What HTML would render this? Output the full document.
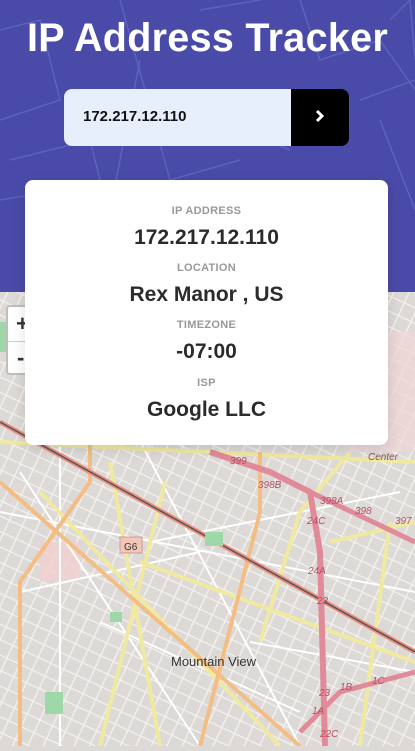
<!DOCTYPE html>
<html><head><meta charset="utf-8"><style>
*{margin:0;padding:0;box-sizing:border-box}
body{width:415px;height:746px;overflow:hidden;font-family:"Liberation Sans",sans-serif;position:relative;background:#dcd9d6}
.hdr{position:absolute;left:0;top:0;width:415px;height:292px;background:#4a4aa8;overflow:hidden}
h1{position:absolute;top:16px;width:100%;text-align:center;color:#fff;font-size:39.5px;font-weight:bold;letter-spacing:0.3px}
.inp{position:absolute;left:64px;top:89px;width:227px;height:57px;background:#e8effc;border-radius:8px 0 0 8px;font-size:15px;font-weight:bold;color:#111;padding:19px 0 0 19px}
.btn{position:absolute;left:291px;top:89px;width:58px;height:57px;background:#000;border-radius:0 8px 8px 0}
.map{position:absolute;left:0;top:292px;width:415px;height:454px}
.zoom{position:absolute;left:6px;top:305px;width:30px;height:70px;background:#fff;border:2px solid rgba(0,0,0,.25);border-radius:4px;font-size:22px;color:#333;font-weight:bold}
.card{position:absolute;left:25px;top:180px;width:363px;height:265px;background:#fff;border-radius:8px;text-align:center;box-shadow:0 4px 14px rgba(0,0,0,.12)}
.l{position:absolute;width:100%;font-size:11px;font-weight:bold;color:#999;letter-spacing:.3px}
.v{position:absolute;width:100%;font-size:21px;font-weight:bold;color:#2b2b2b}
</style></head><body>
<div class="hdr">
<svg width="415" height="292" style="position:absolute;left:0;top:0" fill="none" stroke="#5a64bc" stroke-width="1.5">
<path d="M0 30 L40 20 L60 100 L0 120"/><path d="M10 160 L90 140 L110 220 L30 240 L40 292"/><path d="M120 0 L170 180 L240 160"/><path d="M180 290 L200 250 L330 215 L360 292"/><path d="M300 0 L320 60 L380 40 L415 90"/><path d="M360 100 L415 80"/><path d="M380 120 L415 210"/><path d="M140 60 L100 260"/><path d="M200 10 L260 0"/><path d="M390 20 L410 0 L415 60"/><path d="M220 120 L290 150"/><path d="M0 200 L60 190"/>
</svg>
<h1>IP Address Tracker</h1>
<div class="inp">172.217.12.110</div>
<div class="btn"><svg width="58" height="57"><path d="M317 111 l5 5 l-5 5" transform="translate(-291 -89)" stroke="#fff" stroke-width="3" fill="none"/></svg></div>
</div>
<div class="map"><svg width="415" height="454" fill="none">
<defs><pattern id="st" width="14" height="14" patternUnits="userSpaceOnUse" patternTransform="rotate(25)"><path d="M0 7 H14 M7 0 V14" stroke="#f4f2f0" stroke-width="1.3"/></pattern></defs>
<rect width="415" height="454" fill="url(#st)"/>
<rect x="345" y="40" width="70" height="120" fill="#efd6d6" opacity=".7"/>
<rect x="40" y="250" width="40" height="40" fill="#f2cfcf" opacity=".8"/>
<g stroke="#fff" stroke-width="2">
<path d="M0 220 L415 300"/><path d="M20 180 L200 454"/><path d="M60 120 L60 454"/><path d="M150 250 L400 200"/><path d="M100 330 L300 420"/><path d="M250 350 L415 380"/><path d="M130 130 L300 454"/><path d="M20 300 L200 260"/>
</g>
<g stroke="#f0e9a0" stroke-width="4">
<path d="M0 150 L415 170"/><path d="M110 170 L160 454"/><path d="M140 270 L415 370"/><path d="M165 190 L100 454"/><path d="M330 250 L415 230"/><path d="M390 230 L360 454"/><path d="M40 200 L280 454"/><path d="M260 350 L300 220 L350 160"/>
</g>
<g stroke="#f4bd83" stroke-width="4">
<path d="M0 190 L300 454"/><path d="M20 454 L20 290 L90 190 L90 150"/><path d="M260 220 L200 454"/><path d="M260 220 L260 160"/>
</g>
<path d="M0 130 L415 360" stroke="#ec8f80" stroke-width="5"/>
<path d="M0 130 L415 360" stroke="#555" stroke-width="1.5"/>
<path d="M210 160 L270 180 L310 200 L320 260 L325 454" stroke="#e08a9a" stroke-width="6"/>
<path d="M310 200 L415 250" stroke="#e08a9a" stroke-width="5"/>
<path d="M300 440 L340 400 L415 380" stroke="#e08a9a" stroke-width="5"/>
<g fill="#9fd8a8"><rect x="205" y="240" width="18" height="14"/><rect x="45" y="400" width="18" height="22"/><rect x="110" y="320" width="12" height="10"/><rect x="0" y="30" width="20" height="30"/></g>
<rect x="120" y="245" width="22" height="16" fill="#f2c7b9" stroke="#c99"/>
<text x="124" y="258" font-size="10" fill="#333" font-family="Liberation Sans">G6</text>
<text x="171" y="374" font-size="13" fill="#333" font-family="Liberation Sans">Mountain View</text>
<g fill="#b85060" font-size="10" font-family="Liberation Sans" font-style="italic"><text x="230" y="172">399</text><text x="258" y="196">398B</text><text x="320" y="212">398A</text><text x="355" y="222">398</text><text x="395" y="232">397</text><text x="307" y="232">24C</text><text x="308" y="282">24A</text><text x="317" y="312">23</text><text x="319" y="404">23</text><text x="340" y="398">1B</text><text x="372" y="392">1C</text><text x="312" y="422">1A</text><text x="320" y="445">22C</text></g>
<text x="368" y="168" font-size="10" fill="#8a5050" font-family="Liberation Sans" font-style="italic">Center</text>
</svg></div>
<div class="zoom"><div style="position:absolute;left:8px;top:4px">+</div><div style="position:absolute;left:0;top:34px;width:100%;border-top:1px solid #ccc"></div><div style="position:absolute;left:9px;top:38px">-</div></div>
<div class="card">
<div class="l" style="top:25px">IP ADDRESS</div>
<div class="v" style="top:46px">172.217.12.110</div>
<div class="l" style="top:82px">LOCATION</div>
<div class="v" style="top:103px">Rex Manor , US</div>
<div class="l" style="top:139px">TIMEZONE</div>
<div class="v" style="top:160px">-07:00</div>
<div class="l" style="top:197px">ISP</div>
<div class="v" style="top:218px">Google LLC</div>
</div>
</body></html>
